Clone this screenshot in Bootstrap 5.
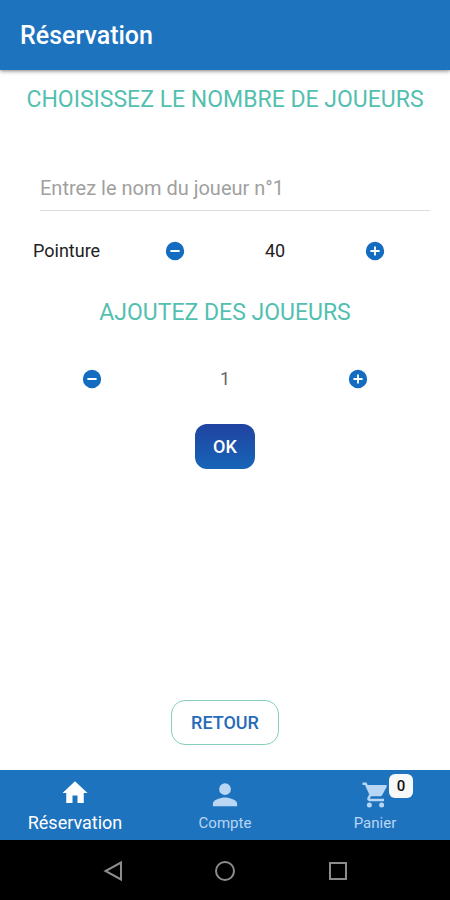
<!DOCTYPE html>
<html lang="fr">
<head>
<meta charset="utf-8">
<meta name="viewport" content="width=device-width, initial-scale=1">
<title>Réservation</title>
<link href="https://cdn.jsdelivr.net/npm/bootstrap@5.3.0/dist/css/bootstrap.min.css" rel="stylesheet">
<style>
  body { font-family: Roboto, "Liberation Sans", sans-serif; font-size: 18px; line-height: 24px; color: #222; background: #fff; }
  .app-header { background: #1e73be; min-height: 70px; padding: 2px 20px 0; box-shadow: 0 1px 4px rgba(0, 0, 0, .5); }
  .app-header h1 { font-size: 25px; line-height: 28px; font-weight: 500; }
  .section-title { font-size: 23px; line-height: 28px; font-weight: 400; color: #53bfb0; }
  .content { padding: 16px 0 25px; }
  .name-field { margin: 52px 20px 0 40px; }
  .name-field .form-control { height: 45px; padding: 0; font-size: 20px; border: 0; border-bottom: 1px solid #dcdcdc; border-radius: 0; background: none; }
  .name-field .form-control::placeholder { color: #a0a0a0; }
  .name-field .form-control:focus { box-shadow: none; border-color: #1e73be; }
  .picker { margin: 0 25px; height: 40px; }
  .picker-label { padding-left: 8px; }
  .size-picker { margin-top: 20px; margin-bottom: 28px; }
  .count-picker { margin-top: 32px; margin-bottom: 25px; color: #666; }
  .btn-round { padding: 8px; line-height: 0; border: 0; }
  .btn-round svg { width: 22px; height: 22px; fill: #136cbf; }
  .btn-app { height: 45px; padding: 0 19px; font-size: 18px; font-weight: 500; line-height: 24px; border-radius: 12px; }
  .btn-ok, .btn-ok:hover { color: #fff; border: 0; padding: 0 18px; background: linear-gradient(#2043a0, #1765b8); }
  .btn-back { color: #266bb9; border: 1px solid #86cfbf; border-radius: 14px; }
  .tab-bar { background: #1e73be; height: 70px; }
  .tab-bar .nav-link { padding: 8px 0 0; color: #b9d6f4; font-size: 15px; line-height: 24px; }
  .tab-bar .nav-link.active { color: #fff; font-size: 18px; }
  .tab-bar svg { width: 30px; height: 30px; fill: currentColor; display: block; margin: 2px auto 1px; }
  .tab-bar .active svg { margin: 0 auto 3px; }
  .cart-count { position: absolute; left: 29px; top: -4px; width: 24px; height: 24px; font-size: 15px; line-height: 24px; font-weight: 500; color: #111; background: #f8f8f8; border-radius: 6px; }
  .system-bar { background: #000; height: 60px; padding: 0 12.5%; }
  .system-bar svg { width: 24px; height: 24px; fill: none; stroke: #8c8c8c; stroke-width: 2; }
</style>
<script defer src="https://cdn.jsdelivr.net/npm/bootstrap@5.3.0/dist/js/bootstrap.bundle.min.js"></script>
</head>
<body class="d-flex flex-column min-vh-100">
<svg class="d-none" aria-hidden="true">
  <symbol id="minus" viewBox="0 0 24 24"><path d="M12 2a10 10 0 1 0 0 20 10 10 0 0 0 0-20zm5 11.200H7v-2.400h10z"/></symbol>
  <symbol id="plus" viewBox="0 0 24 24"><path d="M12 2a10 10 0 1 0 0 20 10 10 0 0 0 0-20zm5 11h-4v4h-2v-4H7v-2h4V7h2v4h4z"/></symbol>
</svg>
<header class="app-header d-flex align-items-center">
  <h1 class="m-0 text-white">Réservation</h1>
</header>
<main class="content flex-grow-1 d-flex flex-column">
  <h2 class="section-title text-center m-0">CHOISISSEZ LE NOMBRE DE JOUEURS</h2>
  <div class="name-field">
    <input class="form-control" type="text" aria-label="Nom du joueur n°1" placeholder="Entrez le nom du joueur n°1">
  </div>
  <div class="picker size-picker">
    <div class="row g-0 h-100 align-items-center text-center">
      <div class="col-3 picker-label text-start">Pointure</div>
      <div class="col-3"><button class="btn btn-round" type="button" aria-label="Diminuer la pointure"><svg><use href="#minus"/></svg></button></div>
      <div class="col-3">40</div>
      <div class="col-3"><button class="btn btn-round" type="button" aria-label="Augmenter la pointure"><svg><use href="#plus"/></svg></button></div>
    </div>
  </div>
  <h2 class="section-title text-center m-0">AJOUTEZ DES JOUEURS</h2>
  <div class="picker count-picker">
    <div class="row g-0 h-100 align-items-center text-center">
      <div class="col-4"><button class="btn btn-round" type="button" aria-label="Retirer un joueur"><svg><use href="#minus"/></svg></button></div>
      <div class="col-4">1</div>
      <div class="col-4"><button class="btn btn-round" type="button" aria-label="Ajouter un joueur"><svg><use href="#plus"/></svg></button></div>
    </div>
  </div>
  <button class="btn btn-app btn-ok align-self-center" type="button">OK</button>
  <button class="btn btn-app btn-back align-self-center mt-auto" type="button">RETOUR</button>
</main>
<nav class="tab-bar" aria-label="Navigation principale">
  <ul class="nav nav-justified h-100">
    <li class="nav-item"><a class="nav-link active" aria-current="page" href="#">
      <svg viewBox="0 0 24 24" aria-hidden="true"><path d="M10 20v-6h4v6h5v-8h3L12 2.500 2 12h3v8z"/></svg>Réservation</a></li>
    <li class="nav-item"><a class="nav-link" href="#">
      <svg viewBox="0 0 24 24" aria-hidden="true"><path d="M12 12a4.700 4.700 0 1 0 0-9.400 4.700 4.700 0 0 0 0 9.400zm0 2c-3.500 0-9.700 1.800-9.700 5v2h19.400v-2c0-3.200-6.200-5-9.700-5z"/></svg>Compte</a></li>
    <li class="nav-item"><a class="nav-link" href="#">
      <span class="position-relative d-inline-block align-top">
        <svg viewBox="0 0 24 24" aria-hidden="true"><path d="M7.500 18a2 2 0 1 0 0 4 2 2 0 0 0 0-4zM2 2v2h2l3.400 7.600-1.350 2.450C5.300 15.400 6.300 17 7.700 17h11.500v-2H8.120a.25.25 0 0 1-.25-.25L8.800 13h7.250c.75 0 1.410-.41 1.750-1.030l3.580-6.490A1 1 0 0 0 20.500 4H6.110l-.94-2zm15.300 16a2 2 0 1 0 0 4 2 2 0 0 0 0-4z"/></svg>
        <span class="cart-count">0</span>
      </span>
      <span class="d-block">Panier</span></a></li>
  </ul>
</nav>
<footer class="system-bar d-flex align-items-center">
  <div class="row g-0 w-100 text-center">
    <div class="col"><button class="btn p-0 border-0" type="button" aria-label="Retour système"><svg viewBox="0 0 24 24"><path d="M20 3.500v17L4.500 12z"/></svg></button></div>
    <div class="col"><button class="btn p-0 border-0" type="button" aria-label="Accueil"><svg viewBox="0 0 24 24"><circle cx="12" cy="12" r="9"/></svg></button></div>
    <div class="col"><button class="btn p-0 border-0" type="button" aria-label="Applications récentes"><svg viewBox="0 0 24 24"><path d="M4 4h16v16H4z"/></svg></button></div>
  </div>
</footer>
</body>
</html>
